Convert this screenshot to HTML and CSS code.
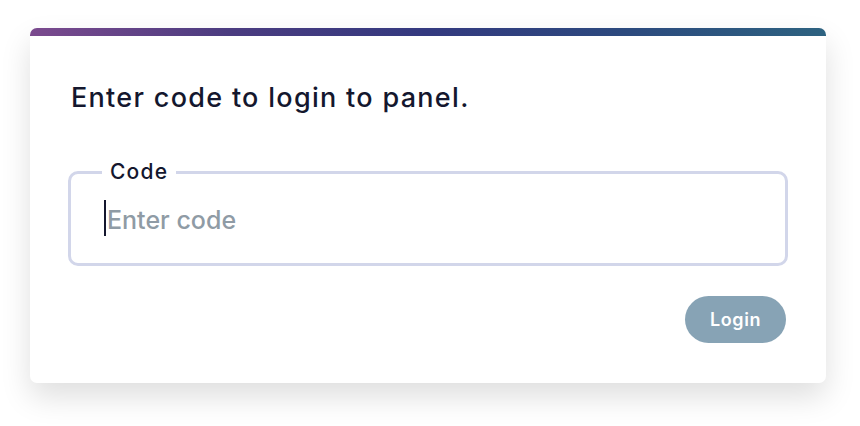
FILE: index.html
```html
<!DOCTYPE html>
<html lang="en">
<head>
<meta charset="utf-8">
<title>Login</title>
<link rel="stylesheet" href="styles.css">
</head>
<body>
<main class="card">
  <div class="card-bar"></div>
  <div class="card-body">
    <h1 class="title">Enter code to login to panel.</h1>
    <fieldset class="field">
      <legend class="field-label">Code</legend>
      <div class="field-input"><span class="caret"></span><span class="placeholder">Enter code</span></div>
    </fieldset>
    <div class="actions">
      <button class="btn" type="button">Login</button>
    </div>
  </div>
</main>
</body>
</html>
```
FILE: styles.css
```css
html, body {
  margin: 0;
  padding: 0;
  background: #ffffff;
}
body {
  box-sizing: border-box;
  min-height: 426px;
  padding: 28px 34px 0 30px;
  font-family: "Inter", "Open Sans", sans-serif;
  color: #14172e;
}
.card {
  display: flex;
  flex-direction: column;
  height: 355px;
  background: #fff;
  border-radius: 7px;
  overflow: hidden;
  box-shadow: 0 14px 30px rgba(0, 0, 0, 0.13);
}
.card-bar {
  height: 8px;
  flex: none;
  background: linear-gradient(90deg, #7b4a8e 0%, #4b3c80 25%, #33397f 50%, #2c4a7e 75%, #2d6280 100%);
}
.card-body {
  padding: 44px 38px 0 38px;
  display: flex;
  flex-direction: column;
}
.title {
  margin: 0 0 0 3px;
  font-size: 27px;
  font-weight: 500;
  line-height: 36px;
  letter-spacing: 1.3px;
}
.field {
  box-sizing: border-box;
  margin: 44px 0 0 0;
  padding: 0 0 0 33px;
  border: 3px solid #d2d6ea;
  border-radius: 10px;
  height: 106px;
  min-width: 0;
}
.field-label {
  padding: 0 8px;
  font-size: 21px;
  line-height: 24px;
  font-weight: 500;
  letter-spacing: 1.2px;
  margin-left: -2px;
}
.field-input {
  display: flex;
  align-items: center;
  height: 68px;
}
.caret {
  width: 2px;
  height: 36px;
  background: #14172e;
  margin-right: 1px;
}
.placeholder {
  font-size: 25px;
  color: #8f9ba5;
  font-weight: 500;
  margin-top: 3px;
}
.actions {
  display: flex;
  justify-content: flex-end;
  margin-top: 30px;
  padding-right: 2px;
}
.btn {
  width: 101px;
  height: 47px;
  border: none;
  border-radius: 24px;
  background: #87a3b5;
  color: #fff;
  font-family: inherit;
  font-size: 18px;
  font-weight: 600;
  letter-spacing: 0.6px;
  cursor: pointer;
}
```
